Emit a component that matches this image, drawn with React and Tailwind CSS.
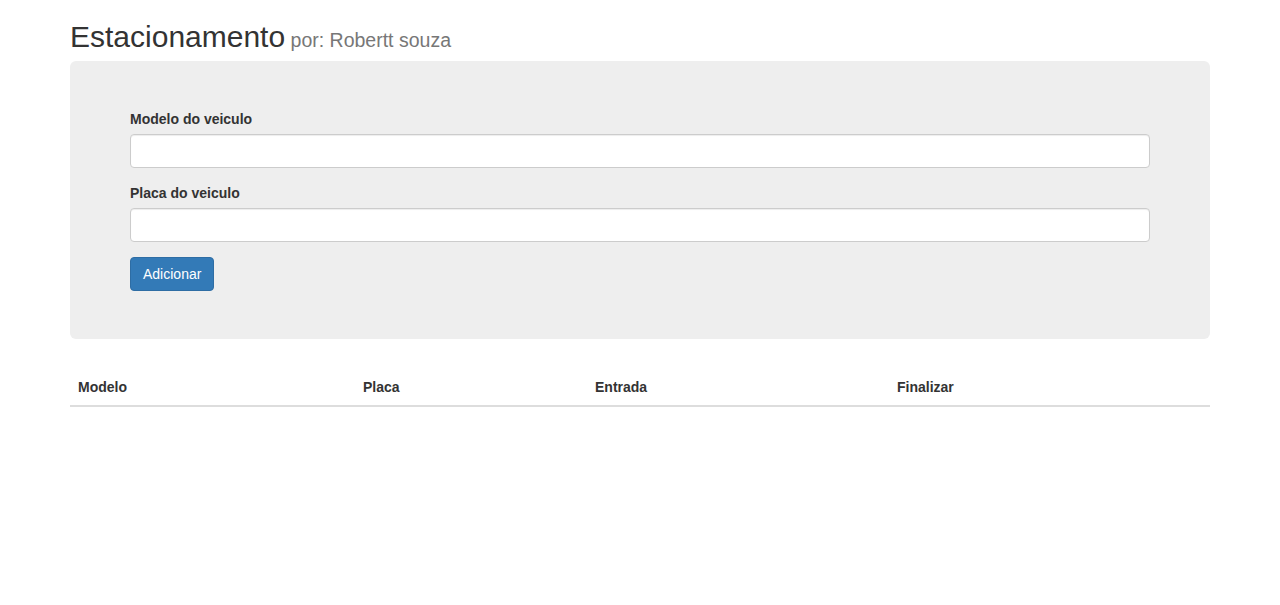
export default function App() {
  return (
    <div className="min-h-[605px] bg-white text-[#333] text-[14px] leading-[20px]" style={{ fontFamily: '"Liberation Sans", Arial, sans-serif' }}>
      <div className="w-[1170px] mx-auto px-[15px] pt-[20px]">
        <h1 className="text-[30px] leading-[33px] h-[33px] mb-[8px] font-normal whitespace-nowrap">
          Estacionamento<small className="text-[19.5px] leading-none text-[#777]"> por: Robertt souza</small>
        </h1>
        <div className="bg-[#eee] rounded-[6px] px-[60px] pt-[48px] pb-[48px] mb-[30px]">
          <div className="mb-[15px]">
            <label className="block font-bold mb-[5px]">Modelo do veiculo</label>
            <input type="text" className="block w-full h-[34px] px-[12px] py-[6px] bg-white border border-[#ccc] rounded-[4px] shadow-[inset_0_1px_1px_rgba(0,0,0,0.075)] outline-none" />
          </div>
          <div className="mb-[15px]">
            <label className="block font-bold mb-[5px]">Placa do veiculo</label>
            <input type="text" className="block w-full h-[34px] px-[12px] py-[6px] bg-white border border-[#ccc] rounded-[4px] shadow-[inset_0_1px_1px_rgba(0,0,0,0.075)] outline-none" />
          </div>
          <button className="h-[34px] px-[12px] bg-[#337ab7] border border-[#2e6da4] rounded-[4px] text-white text-[14px]">Adicionar</button>
        </div>
        <div className="grid grid-cols-[285px_232px_302px_1fr] border-b-2 border-[#ddd] font-bold">
          <div className="p-[8px]">Modelo</div>
          <div className="p-[8px]">Placa</div>
          <div className="p-[8px]">Entrada</div>
          <div className="p-[8px]">Finalizar</div>
        </div>
      </div>
    </div>
  );
}
